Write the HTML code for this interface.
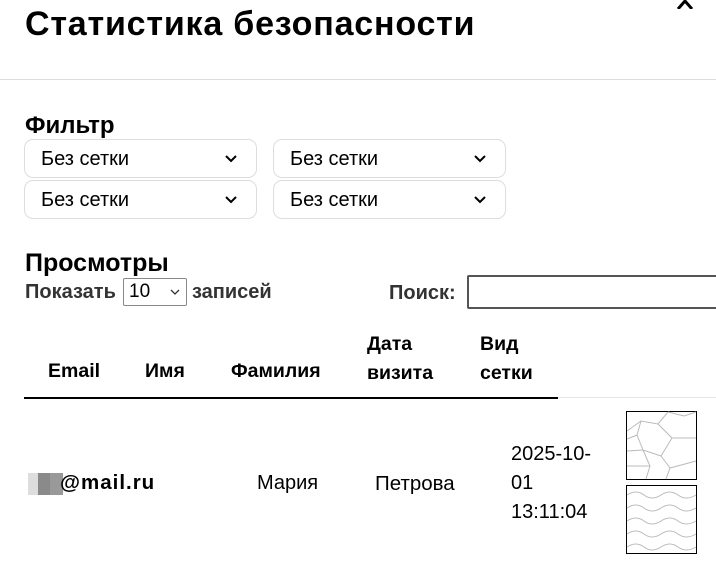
<!DOCTYPE html><html><head><meta charset="utf-8"><style>
body{margin:0;width:716px;height:563px;background:#fff;position:relative;overflow:hidden;font-family:"Liberation Sans",sans-serif;color:#000}
.a{position:absolute;white-space:nowrap}
.sel{position:absolute;width:231px;height:37px;border:1px solid #ddd;border-radius:9px;box-sizing:content-box}
.sel span{position:absolute;left:16px;top:8px;font-size:20px}
.sel svg{position:absolute;left:200px;top:15px}
.h{font-weight:bold;font-size:19.5px}
.t{font-size:20px;font-weight:bold;color:#333}
</style></head><body>
<div class="a" style="left:25px;top:5px;font-size:34px;font-weight:bold;letter-spacing:0.8px">Статистика безопасности</div>
<svg class="a" style="left:676px;top:0" width="18" height="9"><path d="M2 9 L9 1 L16 9" stroke="#000" stroke-width="3" fill="none"/></svg>
<div class="a" style="left:0;top:79px;width:716px;height:1px;background:#ddd"></div>
<div class="a" style="left:25px;top:112px;font-size:24px;font-weight:bold">Фильтр</div>
<div class="sel" style="left:24px;top:139px"><span>Без сетки</span><svg width="12" height="8"><path d="M1 1 L6 6 L11 1" stroke="#000" stroke-width="2" fill="none"/></svg></div>
<div class="sel" style="left:273px;top:139px"><span>Без сетки</span><svg width="12" height="8"><path d="M1 1 L6 6 L11 1" stroke="#000" stroke-width="2" fill="none"/></svg></div>
<div class="sel" style="left:24px;top:180px"><span>Без сетки</span><svg width="12" height="8"><path d="M1 1 L6 6 L11 1" stroke="#000" stroke-width="2" fill="none"/></svg></div>
<div class="sel" style="left:273px;top:180px"><span>Без сетки</span><svg width="12" height="8"><path d="M1 1 L6 6 L11 1" stroke="#000" stroke-width="2" fill="none"/></svg></div>
<div class="a" style="left:25px;top:249px;font-size:25px;font-weight:bold">Просмотры</div>
<div class="a t" style="left:25px;top:281px">Показать</div>
<div class="a" style="left:123px;top:278px;width:62px;height:26px;border:1px solid #888;border-radius:2px"><span class="a" style="left:5px;top:2px;font-size:19px">10</span><svg class="a" style="left:46px;top:10px" width="10" height="7"><path d="M1 1 L5 5 L9 1" stroke="#333" stroke-width="1.3" fill="none"/></svg></div>
<div class="a t" style="left:192px;top:281px">записей</div>
<div class="a t" style="left:389px;top:282px">Поиск:</div>
<div class="a" style="left:467px;top:275px;width:260px;height:30px;border:2px solid #555;border-radius:2px"></div>
<div class="a h" style="left:48px;top:360px">Email</div>
<div class="a h" style="left:145px;top:360px">Имя</div>
<div class="a h" style="left:231px;top:360px">Фамилия</div>
<div class="a h" style="left:367px;top:330px;line-height:29px">Дата<br>визита</div>
<div class="a h" style="left:480px;top:330px;line-height:29px">Вид<br>сетки</div>
<div class="a" style="left:24px;top:397px;width:534px;height:1.5px;background:#000"></div>
<div class="a" style="left:558px;top:397px;width:158px;height:1px;background:#e5e5e5"></div>
<div class="a" style="left:28px;top:473px;width:35px;height:22px;background:linear-gradient(90deg,#ddd 0 10px,#8a8a8a 10px 22px,#999 22px 35px)"></div>
<div class="a h" style="left:60px;top:471px;font-size:20.5px;letter-spacing:1px">@mail.ru</div>
<div class="a" style="left:257px;top:472px;font-size:20px">Мария</div>
<div class="a" style="left:375px;top:472px;font-size:20.5px">Петрова</div>
<div class="a" style="left:511px;top:440px;font-size:20px;line-height:29px">2025-10-<br>01<br>13:11:04</div>
<svg class="a" style="left:626px;top:411px" width="71" height="69"><rect x="0.5" y="0.5" width="70" height="68" fill="#fff" stroke="#000"/><g stroke="#bbb" fill="none"><path d="M1 20 L15 10 L32 13 L42 1 M32 13 L46 27 L35 45 L17 39 L11 24 L15 10 M46 27 L70 27 M35 45 L44 57 L70 50 M17 39 L1 40 M44 57 L40 68 M17 39 L24 55 L1 55 M24 55 L20 68 M11 24 L1 28 M42 1 L58 5 L70 1"/></g></svg>
<svg class="a" style="left:626px;top:485px" width="71" height="69"><rect x="0.5" y="0.5" width="70" height="68" fill="#fff" stroke="#000"/><g stroke="#bbb" fill="none"><path d="M1 10 q9 -6 17 0 t17 0 t17 0 t18 0 M1 23 q9 -6 17 0 t17 0 t17 0 t18 0 M1 36 q9 -6 17 0 t17 0 t17 0 t18 0 M1 49 q9 -6 17 0 t17 0 t17 0 t18 0 M1 62 q9 -6 17 0 t17 0 t17 0 t18 0"/></g></svg>
</body></html>
